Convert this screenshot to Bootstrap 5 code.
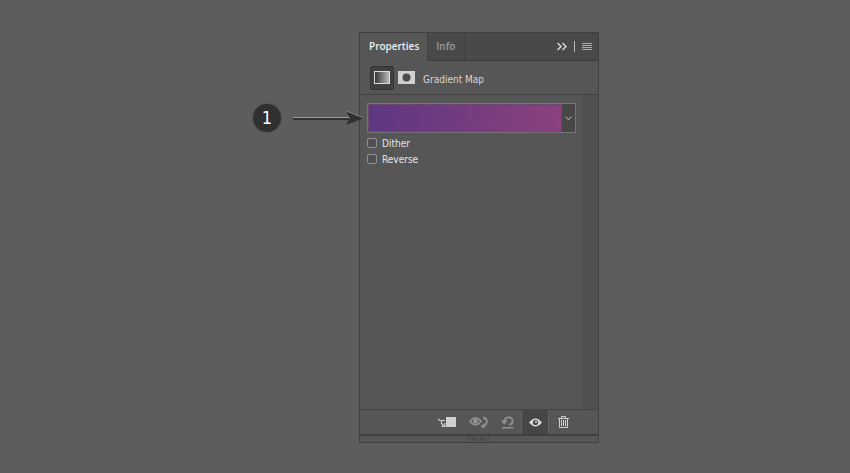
<!DOCTYPE html>
<html lang="en">
<head>
<meta charset="utf-8">
<meta name="viewport" content="width=device-width, initial-scale=1">
<title>Properties</title>
<link href="https://cdn.jsdelivr.net/npm/bootstrap@5.3.0/dist/css/bootstrap.min.css" rel="stylesheet">
<style>
body{background:#5d5d5d;color:#e6e6e6;font-family:"DejaVu Sans Condensed","DejaVu Sans",sans-serif;font-size:10px;line-height:16px}
.stage{padding:32px 0 30px 2px}
svg{display:block;flex:none}
.callout{width:106px;padding-top:72px}
.step{width:28px;height:28px;background:#303030;box-shadow:0 0 2px #444;color:#fff;font-size:18px;line-height:28px}
.arrow{margin-left:12px;z-index:1}
.panel{width:240px;background:#565656;border:1px solid #3f3f3f}
.tabs{height:28px;background:#494949}
.tabs button{height:28px;background:none;border:0;border-bottom:1px solid #3c3c3c;border-right:1px solid #424242;color:#9b9b9b;font-family:"Open Sans","Noto Sans",sans-serif;font-weight:600;padding:0 9px 1px 8px}
.tabs button.on{background:#565656;border-bottom-color:#565656;color:#f0f0f0;padding:0 8px 1px 9px}
.tools{border-bottom:1px solid #3c3c3c;height:28px;padding-right:6px;gap:7px}
.tools button{border:0;padding:0;height:auto}
.kind{height:34px;border-bottom:1px solid #414141;padding-left:10px;color:#d6d6d6}
.kind button{background:none;border:0;padding:0}
.kind .on{background:#404040;border:1px solid #343434;border-radius:2px;padding:4px 3px 5px;margin-right:4px}
.kind span{padding-top:4px}
.main{padding:8px 6px 0 7px}
.rail{width:16px;background:#505050}
.picker{height:30px;border:1px solid #747474;margin-bottom:2px}
.ramp{padding:0;background:linear-gradient(97deg,#5e3781,#8b417e);border:1px solid #6b4770}
.drop{width:13px;background:#474747;border:0;padding:0}
.option{height:16px;gap:5px}
.option input{appearance:none;width:10px;height:10px;border:1px solid #8f8f8f;border-radius:2px;background:#505050;margin:0}
.option input:checked{background:#ccc}
.option label{padding-top:1px}
.actions{height:26px;border-top:1px solid #444;border-bottom:1px solid #3d3d3d;padding-right:21px}
.actions button{background:none;border:0;padding:0;height:24px;width:28px}
.actions .on{background:#464646;border:1px solid #626262;border-width:0 1px}
.grip{height:7px;border-top:1px solid #454545}
</style>
<script src="https://cdn.jsdelivr.net/npm/bootstrap@5.3.0/dist/js/bootstrap.bundle.min.js" defer></script>
</head>
<body>
<main class="stage d-flex justify-content-center min-vh-100">
  <div class="callout d-flex align-items-start flex-shrink-0">
    <div class="step rounded-circle text-center flex-shrink-0">1</div>
    <svg class="arrow position-relative mt-1" width="72" height="20" viewBox="0 0 72 20" aria-hidden="true">
      <path d="M0 10.500h56" stroke="#303030" stroke-width="3"/><path d="M0 9.500h56" stroke="#a0a0a0"/>
      <path d="M53 3l18 7-18 7 4-7z" fill="#303030"/><path d="M53 3l18 7" stroke="#999" stroke-width=".7"/>
    </svg>
  </div>
  <section class="panel d-flex flex-column flex-shrink-0" aria-label="Properties panel">
    <header class="tabs d-flex">
      <button class="on" type="button">Properties</button>
      <button type="button">Info</button>
      <div class="tools d-flex align-items-center justify-content-end flex-grow-1">
        <button type="button" aria-label="Collapse"><svg width="11" height="9" viewBox="0 0 11 9"><path d="M1.500 1l3.500 3.500L1.500 8M6.500 1l3.500 3.500L6.500 8" fill="none" stroke="#d8d8d8" stroke-width="1.500"/></svg></button>
        <svg width="1" height="11" aria-hidden="true"><path d="M.5 0v11" stroke="#bbb"/></svg>
        <button type="button" aria-label="Panel menu"><svg width="10" height="8"><path d="M0 .5h10M0 2.500h10M0 4.500h10M0 6.500h10" stroke="#aaa"/></svg></button>
      </div>
    </header>
    <div class="kind d-flex align-items-center">
      <button class="on" type="button" aria-label="Gradient map"><svg width="16" height="13"><defs><linearGradient id="bw"><stop stop-color="#333"/><stop offset="1" stop-color="#bbb"/></linearGradient></defs><rect x=".5" y=".5" width="15" height="12" fill="url(#bw)" stroke="#ddd"/></svg></button>
      <button type="button" aria-label="Layer mask"><svg width="17" height="13"><path d="M0 0h17v13H0z" fill="#d0d0d0"/><circle cx="8.500" cy="6.500" r="4" fill="#4b4b4b"/></svg></button>
      <span class="ms-2">Gradient Map</span>
    </div>
    <div class="d-flex flex-grow-1">
      <div class="main flex-grow-1">
        <div class="picker d-flex">
          <button class="ramp flex-grow-1" type="button" aria-label="Edit gradient"></button>
          <button class="drop d-flex align-items-center justify-content-center" type="button" aria-label="Choose gradient"><svg width="7" height="5"><path d="M.5 .7l3 3 3-3" fill="none" stroke="#ccc"/></svg></button>
        </div>
        <div class="option d-flex align-items-center"><input type="checkbox" id="dither"><label for="dither">Dither</label></div>
        <div class="option d-flex align-items-center"><input type="checkbox" id="reverse"><label for="reverse">Reverse</label></div>
      </div>
      <div class="rail"></div>
    </div>
    <footer>
      <div class="actions d-flex justify-content-end">
        <button class="d-flex align-items-center justify-content-center" type="button" aria-label="Clip to layer"><svg width="19" height="12" viewBox="0 0 19 12"><path d="M8 1h10v10H8z" fill="#d0d0d0"/><path d="M0 3l2 1.500M2.500 4.500H7M3.500 4.500v3l3 3M6.800 7v3.500H3.500" fill="none" stroke="#d0d0d0" stroke-width="1.200"/></svg></button>
        <button class="d-flex align-items-center justify-content-center ms-1" type="button" aria-label="View previous state"><svg width="20" height="13" viewBox="0 0 20 13"><path d="M1 5.500Q6.500-2 12 5.500 6.500 12 1 5.500z" fill="none" stroke="#929292" stroke-width="1.600"/><circle cx="6.500" cy="5.200" r="2.400" fill="#929292"/><path d="M14 1.500c4.500.5 5.500 6.500.5 8.500" fill="none" stroke="#929292" stroke-width="1.800"/><path d="M11.500 10.500l4-3.500v5.500z" fill="#929292"/></svg></button>
        <button class="d-flex align-items-center justify-content-center" type="button" aria-label="Reset"><svg width="13" height="13" viewBox="0 0 13 13"><path d="M3.500 5C4.500 0 11.500.5 11.500 5c0 2.300-1.500 3.700-3.500 3.700" fill="none" stroke="#929292" stroke-width="1.800"/><path d="M0 4.500h6.500L3.200 8.800zM1 11h11.500v1.500H1z" fill="#929292"/></svg></button>
        <button class="on d-flex align-items-center justify-content-center" type="button" aria-label="Toggle visibility"><svg width="13" height="9" viewBox="0 0 13 9"><path d="M0 4.500Q6.500-3.500 13 4.500 6.500 12.500 0 4.500z" fill="#d8d8d8"/><circle cx="6.500" cy="4.500" r="2.600" fill="#464646"/><circle cx="7" cy="4" r="1" fill="#d8d8d8"/></svg></button>
        <button class="d-flex align-items-center justify-content-center" type="button" aria-label="Delete"><svg width="11" height="12" viewBox="0 0 11 12"><path d="M0 2.500h11M3.500 2V.5h4V2M1.500 3v8.500h8V3M3.500 4v6M5.500 4v6M7.500 4v6" fill="none" stroke="#d0d0d0"/></svg></button>
      </div>
      <div class="grip d-flex justify-content-center"><svg width="22" height="5"><path d="M0 2.500h22" stroke="#484848" stroke-width="4" stroke-dasharray="1 1"/></svg></div>
    </footer>
  </section>
</main>
</body>
</html>
